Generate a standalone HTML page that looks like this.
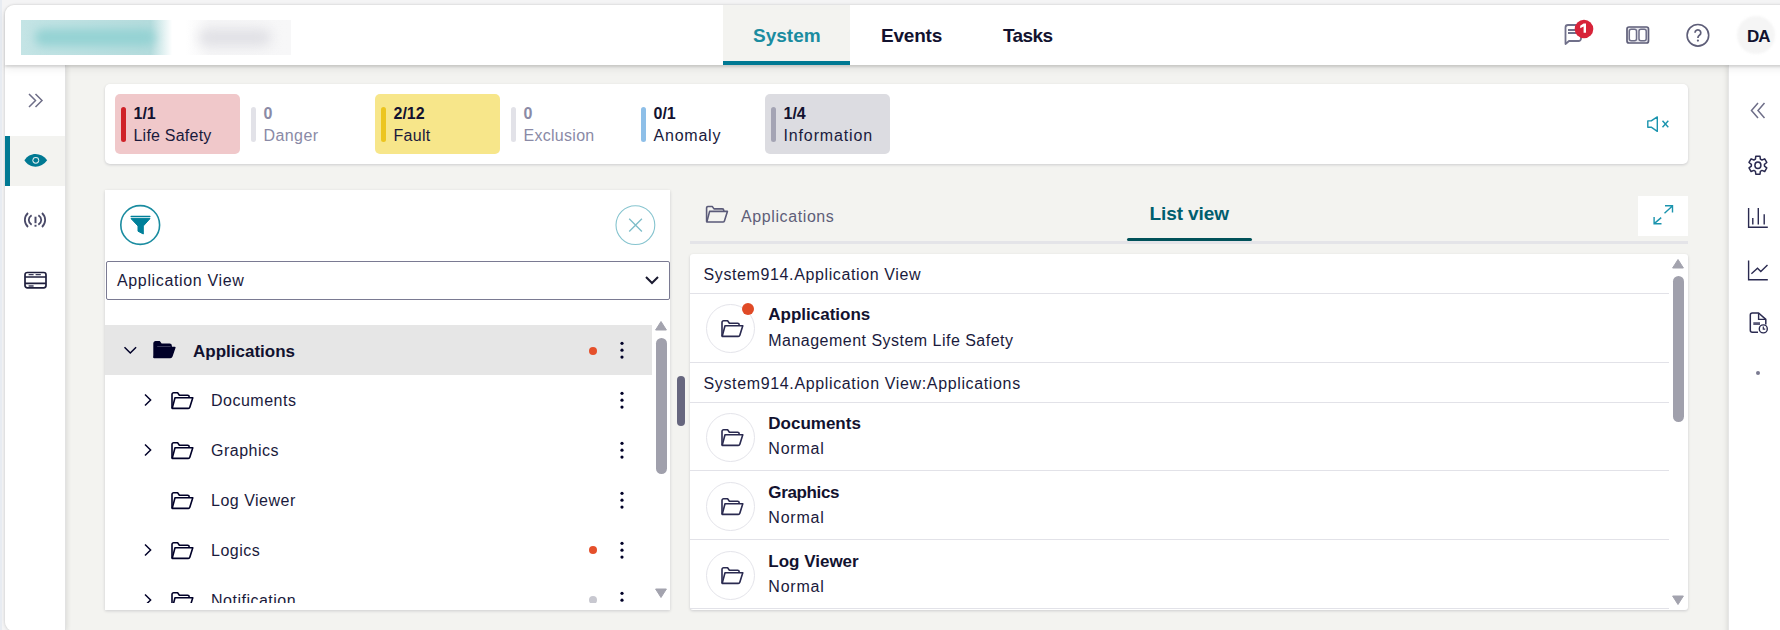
<!DOCTYPE html>
<html><head><meta charset="utf-8">
<style>
*{box-sizing:border-box;margin:0;padding:0}
html,body{width:1780px;height:630px;overflow:hidden;background:#f4f4f5;font-family:"Liberation Sans",sans-serif;color:#000028;position:relative}
.abs{position:absolute}
.t{position:absolute;white-space:nowrap;line-height:1}
svg text{font-family:"Liberation Sans",sans-serif}
</style></head>
<body>

<div class="abs" style="left:0px;top:0px;width:2px;height:630px;background:#e8ecf2"></div>
<div class="abs" style="left:5px;top:5px;width:1800px;height:626px;background:#f3f3f0;border-radius:9px;box-shadow:0 0 3px rgba(0,0,0,.14)"></div>
<div class="abs" style="left:5px;top:5px;width:1800px;height:60px;background:#fff;border-radius:9px 0 0 0;box-shadow:0 1.5px 2.5px rgba(0,0,0,.13),0 4px 8px rgba(0,0,0,.07);z-index:3"></div>
<div class="abs" style="left:21px;top:20px;width:270px;height:35px;overflow:hidden;z-index:4;background:linear-gradient(90deg,#c4e4e5 0,#b5dcdd 48%,#fff 56%,#fff 61%,#f6f6f7 70%,#f7f7f8 100%)"><div class="abs" style="left:14px;top:9px;width:120px;height:17px;border-radius:8px;background:#94d2d3;filter:blur(5px)"></div><div class="abs" style="left:178px;top:9px;width:72px;height:17px;border-radius:8px;background:#e0e0e5;filter:blur(6px)"></div></div>
<div class="abs" style="z-index:5;left:0;top:0">
<div class="abs" style="left:723px;top:5px;width:127px;height:60px;background:#f3f3f0"></div>
<div class="abs" style="left:723px;top:61px;width:127px;height:4px;background:#007993"></div>
<div class="t" style="left:753px;top:25.92px;font-size:19px;font-weight:bold;color:#1a8ca0;letter-spacing:0px;">System</div>
<div class="t" style="left:881px;top:25.92px;font-size:19px;font-weight:bold;color:#12122f;letter-spacing:-0.2px;">Events</div>
<div class="t" style="left:1003px;top:25.92px;font-size:19px;font-weight:bold;color:#12122f;letter-spacing:-0.6px;">Tasks</div>
<svg class="abs" style="left:1555px;top:15px;" width="40" height="35" viewBox="0 0 40 35"><path d="M10.5 29 V12.5 a2.5 2.5 0 0 1 2.5 -2.5 H26 V23.5 a2.5 2.5 0 0 1 -2.5 2.5 H14 Z" fill="none" stroke="#70708a" stroke-width="1.8" stroke-linejoin="round"/>
<path d="M13 15 H22 M13 18 H22" stroke="#70708a" stroke-width="1.8"/>
<circle cx="29" cy="14" r="9.3" fill="#d72339"/>
<path d="M25.2 10.8 L28.6 8.6 H31 V17.8 H28.6 V11.6 L25.2 13.2 Z" fill="#fff"/></svg>
<svg class="abs" style="left:1615px;top:15px;" width="40" height="35" viewBox="0 0 40 35"><rect x="12" y="12" width="21.5" height="16" rx="2" fill="#e6e6ec" stroke="#5e5e78" stroke-width="1.7"/>
<rect x="14.3" y="14.3" width="7.2" height="11.4" rx="2" fill="#fff" stroke="#6e6e88" stroke-width="1.5"/>
<rect x="24" y="14.3" width="7.2" height="11.4" rx="2" fill="#fff" stroke="#6e6e88" stroke-width="1.5"/></svg>
<svg class="abs" style="left:1675px;top:15px;" width="40" height="35" viewBox="0 0 40 35"><circle cx="22.9" cy="20.3" r="10.8" fill="none" stroke="#5e5e78" stroke-width="1.6"/>
<path d="M20 17.8 a2.9 2.9 0 1 1 4.4 2.5 c-1.1 .7 -1.5 1.2 -1.5 2.6" fill="none" stroke="#5e5e78" stroke-width="1.7"/>
<circle cx="22.9" cy="25.6" r="1.1" fill="#5e5e78"/></svg>
<div class="abs" style="left:1737px;top:16px;width:38px;height:38px;border-radius:50%;background:#f5f5f5;filter:blur(1px)"></div>
<div class="t" style="left:1747px;top:27.61px;font-size:17px;font-weight:bold;color:#12122f;letter-spacing:-1px;">DA</div>
</div>
<div class="abs" style="left:5px;top:65px;width:61px;height:566px;background:#fff;border-right:1px solid #e2e2e2;border-radius:0 0 0 9px;box-shadow:1px 0 5px rgba(0,0,0,.10);z-index:2"></div>
<div class="abs" style="z-index:3;left:0;top:0">
<svg class="abs" style="left:25px;top:90px;" width="20" height="20" viewBox="0 0 20 20"><path d="M4 4 L10.5 10.5 L4 17 M10.5 4 L17 10.5 L10.5 17" fill="none" stroke="#6e6e88" stroke-width="1.5"/></svg>
<div class="abs" style="left:5px;top:136px;width:60px;height:50px;background:#f3f3f0"></div>
<div class="abs" style="left:5px;top:136px;width:5px;height:50px;background:#007993"></div>
<svg class="abs" style="left:18px;top:145px;" width="35" height="35" viewBox="0 0 35 35"><path d="M6.4 15.3 C11.5 6.8 23.3 6.8 29.2 15.3 C23.3 23.8 11.5 23.8 6.4 15.3 Z" fill="#007993"/><circle cx="17.8" cy="15.3" r="3.4" fill="#dfeced"/><circle cx="17.8" cy="15.3" r="2.4" fill="#007993"/></svg>
<svg class="abs" style="left:22px;top:208px;" width="26" height="24" viewBox="0 0 26 24"><path d="M6 5 C1.8 9 1.8 15 6 19 M9.6 7.3 C5.8 10 5.8 14 9.6 16.7 M20 5 C24.2 9 24.2 15 20 19 M16.4 7.3 C20.2 10 20.2 14 16.4 16.7" fill="none" stroke="#4a4a68" stroke-width="1.8"/>
<path d="M13.5 8.7 V15.2" stroke="#4a4a68" stroke-width="2"/><rect x="12.5" y="16.8" width="2" height="1.9" fill="#4a4a68"/></svg>
<svg class="abs" style="left:22px;top:268px;" width="26" height="24" viewBox="0 0 26 24"><rect x="3" y="4.5" width="21" height="15.4" rx="2.3" fill="none" stroke="#1e1e3c" stroke-width="1.7"/>
<path d="M3 9 H24 M3 15.4 H24" stroke="#1e1e3c" stroke-width="1.6"/><path d="M6.6 6.6 H11.6 M13.6 6.6 H18.8 M6.6 18 H11.6" stroke="#3a3a58" stroke-width="1.3"/></svg>
</div>
<div class="abs" style="left:1727.5px;top:65px;width:80px;height:600px;background:#fff;border-left:1px solid #e6e6e6;box-shadow:-1px 0 5px rgba(0,0,0,.10);z-index:2"></div>
<div class="abs" style="z-index:3;left:0;top:0">
<svg class="abs" style="left:1747px;top:100px;" width="20" height="20" viewBox="0 0 20 20"><path d="M11 3 L4.5 10.5 L11 18 M17.5 3 L11 10.5 L17.5 18" fill="none" stroke="#6e6e88" stroke-width="1.5"/></svg>
<svg class="abs" style="left:1740px;top:148px;" width="35" height="35" viewBox="0 0 35 35"><path d="M15.43 11.08 L15.81 8.14 L19.99 8.14 L20.37 11.08 L21.96 12.00 L24.70 10.86 L26.79 14.48 L24.44 16.28 L24.44 18.12 L26.79 19.92 L24.70 23.54 L21.96 22.40 L20.37 23.32 L19.99 26.26 L15.81 26.26 L15.43 23.32 L13.84 22.40 L11.10 23.54 L9.01 19.92 L11.36 18.12 L11.36 16.28 L9.01 14.48 L11.10 10.86 L13.84 12.00 Z" fill="none" stroke="#2a2a50" stroke-width="1.5" stroke-linejoin="round"/><ellipse cx="17.9" cy="17.2" rx="3" ry="3.3" fill="none" stroke="#2a2a50" stroke-width="1.5"/></svg>
<svg class="abs" style="left:1740px;top:200px;" width="35" height="35" viewBox="0 0 35 35"><path d="M8.6 8 V27.2 H27.8 M12.8 18 V24.5 M18.3 8 V24.5 M24.2 14.2 V24.5" fill="none" stroke="#2a2a50" stroke-width="1.4"/></svg>
<svg class="abs" style="left:1740px;top:253px;" width="35" height="35" viewBox="0 0 35 35"><path d="M8.6 7.5 V26.7 H27.8 M11.4 20.8 L17.5 15.3 L20.8 18.6 L27.5 12" fill="none" stroke="#2a2a50" stroke-width="1.4"/></svg>
<svg class="abs" style="left:1740px;top:305px;" width="35" height="35" viewBox="0 0 35 35"><path d="M18 27.2 H12.3 a2 2 0 0 1 -2 -2 V10 a2 2 0 0 1 2 -2 H18.6 L25.8 14.4 V19.5" fill="none" stroke="#2a2a50" stroke-width="1.5" stroke-linejoin="round"/>
<path d="M18.6 8 V14.4 H25.8" fill="none" stroke="#2a2a50" stroke-width="1.4"/><rect x="13.3" y="17.2" width="6.7" height="2.8" fill="#5a5a78"/>
<circle cx="23.3" cy="23.9" r="4" fill="#fff" stroke="#2a2a50" stroke-width="1.4"/><path d="M23.3 21.6 V24.2 H25.2" fill="none" stroke="#2a2a50" stroke-width="1.2"/></svg>
<div class="abs" style="left:1756px;top:371px;width:4px;height:4px;border-radius:50%;background:#7a7a90"></div>
</div>
<div class="abs" style="left:105px;top:84px;width:1583px;height:80px;background:#fff;border-radius:5px;box-shadow:0 1px 3px rgba(0,0,40,.16)"></div>
<div class="abs" style="left:115px;top:94px;width:125px;height:60px;background:#f0c8ca;border-radius:5px"></div>
<div class="abs" style="left:120.5px;top:106.5px;width:5px;height:35px;background:#cf2128;border-radius:3px"></div>
<div class="t" style="left:133.5px;top:106.26px;font-size:16px;font-weight:bold;color:#12122f;letter-spacing:0px;">1/1</div>
<div class="t" style="left:133.5px;top:127.56px;font-size:16px;font-weight:normal;color:#1a1a3c;letter-spacing:0.22px;">Life Safety</div>
<div class="abs" style="left:250.5px;top:106.5px;width:5px;height:35px;background:#e2e2e8;border-radius:3px"></div>
<div class="t" style="left:263.5px;top:106.26px;font-size:16px;font-weight:bold;color:#8a8aa6;letter-spacing:0px;">0</div>
<div class="t" style="left:263.5px;top:127.56px;font-size:16px;font-weight:normal;color:#8a8aa6;letter-spacing:0.42px;">Danger</div>
<div class="abs" style="left:375px;top:94px;width:125px;height:60px;background:#f7e68a;border-radius:5px"></div>
<div class="abs" style="left:380.5px;top:106.5px;width:5px;height:35px;background:#ecc51f;border-radius:3px"></div>
<div class="t" style="left:393.5px;top:106.26px;font-size:16px;font-weight:bold;color:#12122f;letter-spacing:0px;">2/12</div>
<div class="t" style="left:393.5px;top:127.56px;font-size:16px;font-weight:normal;color:#1a1a3c;letter-spacing:0.28px;">Fault</div>
<div class="abs" style="left:510.5px;top:106.5px;width:5px;height:35px;background:#e2e2e8;border-radius:3px"></div>
<div class="t" style="left:523.5px;top:106.26px;font-size:16px;font-weight:bold;color:#8a8aa6;letter-spacing:0px;">0</div>
<div class="t" style="left:523.5px;top:127.56px;font-size:16px;font-weight:normal;color:#8a8aa6;letter-spacing:0.28px;">Exclusion</div>
<div class="abs" style="left:640.5px;top:106.5px;width:5px;height:35px;background:#8ebfe8;border-radius:3px"></div>
<div class="t" style="left:653.5px;top:106.26px;font-size:16px;font-weight:bold;color:#12122f;letter-spacing:0px;">0/1</div>
<div class="t" style="left:653.5px;top:127.56px;font-size:16px;font-weight:normal;color:#1a1a3c;letter-spacing:0.78px;">Anomaly</div>
<div class="abs" style="left:765px;top:94px;width:125px;height:60px;background:#dcdce1;border-radius:5px"></div>
<div class="abs" style="left:770.5px;top:106.5px;width:5px;height:35px;background:#a4a4b4;border-radius:3px"></div>
<div class="t" style="left:783.5px;top:106.26px;font-size:16px;font-weight:bold;color:#12122f;letter-spacing:0px;">1/4</div>
<div class="t" style="left:783.5px;top:127.56px;font-size:16px;font-weight:normal;color:#1a1a3c;letter-spacing:0.86px;">Information</div>
<svg class="abs" style="left:1640px;top:110px;" width="35" height="28" viewBox="0 0 35 28"><path d="M7.8 10.9 H11.2 L17.3 6.9 V21.4 L11.2 17.2 H7.8 Z" fill="none" stroke="#1a94ae" stroke-width="1.4" stroke-linejoin="round"/>
<path d="M22.5 10.8 L28.3 17.2 M28.3 10.8 L22.5 17.2" stroke="#1a94ae" stroke-width="1.4"/></svg>
<div class="abs" style="left:105px;top:190px;width:565px;height:420px;background:#fff;box-shadow:0 1px 3px rgba(0,0,40,.16)"></div>
<svg class="abs" style="left:118px;top:203px;" width="44" height="44" viewBox="0 0 44 44"><circle cx="22.2" cy="22" r="19.4" fill="none" stroke="#1a8ca0" stroke-width="1.6"/>
<path d="M13 15.6 H32 L25.3 23 V31 L20 28.2 V23 Z" fill="#00809a" stroke="#00809a" stroke-width="1" stroke-linejoin="round"/><path d="M13.2 13.6 H31.8" stroke="#00809a" stroke-width="1.5" stroke-linecap="round"/></svg>
<svg class="abs" style="left:613px;top:203px;" width="44" height="44" viewBox="0 0 44 44"><circle cx="22.4" cy="22.1" r="19.4" fill="none" stroke="#86c4cf" stroke-width="1.1"/>
<path d="M16.2 15.7 L28.9 28.5 M28.9 15.7 L16.2 28.5" stroke="#7dbdc9" stroke-width="1.3"/></svg>
<div class="abs" style="left:106px;top:261px;width:564px;height:39px;border:1.5px solid #7a7a92;border-radius:2px;background:#fff"></div>
<div class="t" style="left:117px;top:273.46px;font-size:16px;font-weight:normal;color:#1a1a3c;letter-spacing:0.65px;">Application View</div>
<svg class="abs" style="left:640px;top:270px;" width="24" height="20" viewBox="0 0 24 20"><path d="M6 7 L12 13 L18 7" fill="none" stroke="#1a1a30" stroke-width="2"/></svg>
<div class="abs" style="left:105px;top:325px;width:547px;height:50px;background:#e6e6e6"></div>
<svg class="abs" style="left:120px;top:340px;" width="20" height="20" viewBox="0 0 20 20"><path d="M4.5 7.3 L10.3 13 L16.1 7.3" fill="none" stroke="#000028" stroke-width="1.5"/></svg>
<svg class="abs" style="left:152px;top:341px;" width="24" height="18" viewBox="0 0 24 18"><path d="M2 16.2 V2.4 a1.6 1.6 0 0 1 1.6 -1.6 H7.6 L9.4 3.3 H17.6 a1.6 1.6 0 0 1 1.6 1.6 V5.8 H5 Z" fill="#000028" stroke="#000028" stroke-width="1.4" stroke-linejoin="round"/><path d="M5.2 5.8 H18.6" stroke="#8a8aa0" stroke-width="0.8"/><path d="M2.2 16.4 L5 6.6 H22.8 L19.8 15.3 a1.6 1.6 0 0 1 -1.5 1.1 Z" fill="#000028" stroke="#000028" stroke-width="1.6" stroke-linejoin="round"/></svg>
<div class="t" style="left:193px;top:342.61px;font-size:17px;font-weight:bold;color:#12122f;letter-spacing:0px;">Applications</div>
<div class="abs" style="left:589px;top:346.8px;width:8px;height:8px;border-radius:50%;background:#e5502b"></div>
<svg class="abs" style="left:617.6px;top:339.2px;" width="8" height="22" viewBox="0 0 8 22"><circle cx="4" cy="4.3" r="1.6" fill="#000028"/><circle cx="4" cy="11.2" r="1.6" fill="#000028"/><circle cx="4" cy="18.1" r="1.6" fill="#000028"/></svg>
<div class="abs" style="left:105px;top:375px;width:547px;height:228px;overflow:hidden">
<svg class="abs" style="left:34px;top:15px;" width="20" height="20" viewBox="0 0 20 20"><path d="M6 4.5 L11.6 10 L6 15.5" fill="none" stroke="#000028" stroke-width="1.5"/></svg>
<svg class="abs" style="left:65px;top:16.5px;" width="24" height="18" viewBox="0 0 24 18"><path d="M2 16.2 V2.4 a1.6 1.6 0 0 1 1.6 -1.6 H7.6 L9.4 3.3 H17.6 a1.6 1.6 0 0 1 1.6 1.6 V5.8" fill="none" stroke="#000028" stroke-width="1.6" stroke-linejoin="round"/><path d="M2.2 16.4 L5 5.8 H22.8 L19.8 15.3 a1.6 1.6 0 0 1 -1.5 1.1 Z" fill="#fff" stroke="#000028" stroke-width="1.6" stroke-linejoin="round"/></svg>
<div class="t" style="left:106px;top:18.46px;font-size:16px;font-weight:normal;color:#1a1a3c;letter-spacing:0.5px;">Documents</div>
<svg class="abs" style="left:512.6px;top:14px;" width="8" height="22" viewBox="0 0 8 22"><circle cx="4" cy="4.3" r="1.6" fill="#000028"/><circle cx="4" cy="11.2" r="1.6" fill="#000028"/><circle cx="4" cy="18.1" r="1.6" fill="#000028"/></svg>
<svg class="abs" style="left:34px;top:65px;" width="20" height="20" viewBox="0 0 20 20"><path d="M6 4.5 L11.6 10 L6 15.5" fill="none" stroke="#000028" stroke-width="1.5"/></svg>
<svg class="abs" style="left:65px;top:66.5px;" width="24" height="18" viewBox="0 0 24 18"><path d="M2 16.2 V2.4 a1.6 1.6 0 0 1 1.6 -1.6 H7.6 L9.4 3.3 H17.6 a1.6 1.6 0 0 1 1.6 1.6 V5.8" fill="none" stroke="#000028" stroke-width="1.6" stroke-linejoin="round"/><path d="M2.2 16.4 L5 5.8 H22.8 L19.8 15.3 a1.6 1.6 0 0 1 -1.5 1.1 Z" fill="#fff" stroke="#000028" stroke-width="1.6" stroke-linejoin="round"/></svg>
<div class="t" style="left:106px;top:68.46px;font-size:16px;font-weight:normal;color:#1a1a3c;letter-spacing:0.5px;">Graphics</div>
<svg class="abs" style="left:512.6px;top:64px;" width="8" height="22" viewBox="0 0 8 22"><circle cx="4" cy="4.3" r="1.6" fill="#000028"/><circle cx="4" cy="11.2" r="1.6" fill="#000028"/><circle cx="4" cy="18.1" r="1.6" fill="#000028"/></svg>
<svg class="abs" style="left:65px;top:116.5px;" width="24" height="18" viewBox="0 0 24 18"><path d="M2 16.2 V2.4 a1.6 1.6 0 0 1 1.6 -1.6 H7.6 L9.4 3.3 H17.6 a1.6 1.6 0 0 1 1.6 1.6 V5.8" fill="none" stroke="#000028" stroke-width="1.6" stroke-linejoin="round"/><path d="M2.2 16.4 L5 5.8 H22.8 L19.8 15.3 a1.6 1.6 0 0 1 -1.5 1.1 Z" fill="#fff" stroke="#000028" stroke-width="1.6" stroke-linejoin="round"/></svg>
<div class="t" style="left:106px;top:118.46px;font-size:16px;font-weight:normal;color:#1a1a3c;letter-spacing:0.5px;">Log Viewer</div>
<svg class="abs" style="left:512.6px;top:114px;" width="8" height="22" viewBox="0 0 8 22"><circle cx="4" cy="4.3" r="1.6" fill="#000028"/><circle cx="4" cy="11.2" r="1.6" fill="#000028"/><circle cx="4" cy="18.1" r="1.6" fill="#000028"/></svg>
<svg class="abs" style="left:34px;top:165px;" width="20" height="20" viewBox="0 0 20 20"><path d="M6 4.5 L11.6 10 L6 15.5" fill="none" stroke="#000028" stroke-width="1.5"/></svg>
<svg class="abs" style="left:65px;top:166.5px;" width="24" height="18" viewBox="0 0 24 18"><path d="M2 16.2 V2.4 a1.6 1.6 0 0 1 1.6 -1.6 H7.6 L9.4 3.3 H17.6 a1.6 1.6 0 0 1 1.6 1.6 V5.8" fill="none" stroke="#000028" stroke-width="1.6" stroke-linejoin="round"/><path d="M2.2 16.4 L5 5.8 H22.8 L19.8 15.3 a1.6 1.6 0 0 1 -1.5 1.1 Z" fill="#fff" stroke="#000028" stroke-width="1.6" stroke-linejoin="round"/></svg>
<div class="t" style="left:106px;top:168.46px;font-size:16px;font-weight:normal;color:#1a1a3c;letter-spacing:0.5px;">Logics</div>
<div class="abs" style="left:484px;top:171.20000000000005px;width:8px;height:8px;border-radius:50%;background:#e5502b"></div>
<svg class="abs" style="left:512.6px;top:164px;" width="8" height="22" viewBox="0 0 8 22"><circle cx="4" cy="4.3" r="1.6" fill="#000028"/><circle cx="4" cy="11.2" r="1.6" fill="#000028"/><circle cx="4" cy="18.1" r="1.6" fill="#000028"/></svg>
<svg class="abs" style="left:34px;top:215px;" width="20" height="20" viewBox="0 0 20 20"><path d="M6 4.5 L11.6 10 L6 15.5" fill="none" stroke="#000028" stroke-width="1.5"/></svg>
<svg class="abs" style="left:65px;top:216.5px;" width="24" height="18" viewBox="0 0 24 18"><path d="M2 16.2 V2.4 a1.6 1.6 0 0 1 1.6 -1.6 H7.6 L9.4 3.3 H17.6 a1.6 1.6 0 0 1 1.6 1.6 V5.8" fill="none" stroke="#000028" stroke-width="1.6" stroke-linejoin="round"/><path d="M2.2 16.4 L5 5.8 H22.8 L19.8 15.3 a1.6 1.6 0 0 1 -1.5 1.1 Z" fill="#fff" stroke="#000028" stroke-width="1.6" stroke-linejoin="round"/></svg>
<div class="t" style="left:106px;top:218.46px;font-size:16px;font-weight:normal;color:#1a1a3c;letter-spacing:0.5px;">Notification</div>
<div class="abs" style="left:484px;top:221.20000000000005px;width:8px;height:8px;border-radius:50%;background:#c8c8d0"></div>
<svg class="abs" style="left:512.6px;top:214px;" width="8" height="22" viewBox="0 0 8 22"><circle cx="4" cy="4.3" r="1.6" fill="#000028"/><circle cx="4" cy="11.2" r="1.6" fill="#000028"/><circle cx="4" cy="18.1" r="1.6" fill="#000028"/></svg>
</div>
<svg class="abs" style="left:654px;top:320px;" width="14" height="12" viewBox="0 0 14 12"><path d="M1.6 10 L7 1.5 L12.4 10 Z" fill="#a3a3ae" stroke="#a3a3ae" stroke-width="1" stroke-linejoin="round"/></svg>
<div class="abs" style="left:655.5px;top:338px;width:11.5px;height:136px;background:#a0a0ac;border-radius:6px"></div>
<svg class="abs" style="left:654px;top:587px;" width="14" height="12" viewBox="0 0 14 12"><path d="M1.6 2 L7 10.5 L12.4 2 Z" fill="#a3a3ae" stroke="#a3a3ae" stroke-width="1" stroke-linejoin="round"/></svg>
<div class="abs" style="left:676.5px;top:375.5px;width:8px;height:50px;background:#66667e;border-radius:4px"></div>
<svg class="abs" style="left:703px;top:204px;transform:translate(1.6px,1.6px)" width="26" height="22" viewBox="0 0 26 22"><path d="M2 16.2 V2.4 a1.6 1.6 0 0 1 1.6 -1.6 H7.6 L9.4 3.3 H17.6 a1.6 1.6 0 0 1 1.6 1.6 V5.8" fill="none" stroke="#5a5a78" stroke-width="1.6" stroke-linejoin="round"/><path d="M2.2 16.4 L5 5.8 H22.8 L19.8 15.3 a1.6 1.6 0 0 1 -1.5 1.1 Z" fill="none" stroke="#5a5a78" stroke-width="1.6" stroke-linejoin="round"/></svg>
<div class="t" style="left:741px;top:208.96px;font-size:16px;font-weight:normal;color:#5e5e78;letter-spacing:0.6px;">Applications</div>
<div class="t" style="left:1149.5px;top:204.42px;font-size:19px;font-weight:bold;color:#005e6e;letter-spacing:-0.1px;">List view</div>
<div class="abs" style="left:690px;top:240.5px;width:998px;height:3.5px;background:#e4e4e8"></div>
<div class="abs" style="left:1127px;top:237.5px;width:125px;height:3px;background:#005159;border-radius:1.5px"></div>
<div class="abs" style="left:1638px;top:195.5px;width:50px;height:40px;background:#fff"></div>
<svg class="abs" style="left:1648px;top:200px;" width="32" height="32" viewBox="0 0 32 32"><path d="M16.5 13.3 L24.4 5.9 M17 5.8 H24.5 V12.4" fill="none" stroke="#1a94ae" stroke-width="1.4"/>
<path d="M13.2 17.6 L6.2 23.6 M6.1 16.9 V23.7 H13.5" fill="none" stroke="#1a94ae" stroke-width="1.4"/></svg>
<div class="abs" style="left:690px;top:254px;width:998px;height:356px;background:#fff;border-radius:3px;box-shadow:0 1px 3px rgba(0,0,40,.16)"></div>
<div class="t" style="left:703.5px;top:267.46px;font-size:16px;font-weight:normal;color:#1a1a3c;letter-spacing:0.62px;">System914.Application View</div>
<div class="abs" style="left:690px;top:293px;width:979px;height:1px;background:#e2e2e8"></div>
<div class="t" style="left:703.5px;top:376.26px;font-size:16px;font-weight:normal;color:#1a1a3c;letter-spacing:0.64px;">System914.Application View:Applications</div>
<div class="abs" style="left:690px;top:362px;width:979px;height:1px;background:#e2e2e8"></div>
<div class="abs" style="left:690px;top:402px;width:979px;height:1px;background:#e2e2e8"></div>
<div class="abs" style="left:706px;top:304.3px;width:49px;height:49px;border-radius:50%;border:1px solid #e4e4ea;background:#fff"></div>
<svg class="abs" style="left:719.5px;top:320.0px;" width="24" height="18" viewBox="0 0 24 18"><path d="M2 16.2 V2.4 a1.6 1.6 0 0 1 1.6 -1.6 H7.6 L9.4 3.3 H17.6 a1.6 1.6 0 0 1 1.6 1.6 V5.8" fill="none" stroke="#2a2a50" stroke-width="1.6" stroke-linejoin="round"/><path d="M2.2 16.4 L5 5.8 H22.8 L19.8 15.3 a1.6 1.6 0 0 1 -1.5 1.1 Z" fill="#fff" stroke="#2a2a50" stroke-width="1.6" stroke-linejoin="round"/></svg>
<div class="abs" style="left:742px;top:303.0px;width:12.2px;height:12.2px;border-radius:50%;background:#e04a26"></div>
<div class="t" style="left:768.3px;top:306.11px;font-size:17px;font-weight:bold;color:#12122f;letter-spacing:0px;">Applications</div>
<div class="t" style="left:768.3px;top:332.56px;font-size:16px;font-weight:normal;color:#1a1a3c;letter-spacing:0.48px;">Management System Life Safety</div>
<div class="abs" style="left:706px;top:413.1px;width:49px;height:49px;border-radius:50%;border:1px solid #e4e4ea;background:#fff"></div>
<svg class="abs" style="left:719.5px;top:428.8px;" width="24" height="18" viewBox="0 0 24 18"><path d="M2 16.2 V2.4 a1.6 1.6 0 0 1 1.6 -1.6 H7.6 L9.4 3.3 H17.6 a1.6 1.6 0 0 1 1.6 1.6 V5.8" fill="none" stroke="#2a2a50" stroke-width="1.6" stroke-linejoin="round"/><path d="M2.2 16.4 L5 5.8 H22.8 L19.8 15.3 a1.6 1.6 0 0 1 -1.5 1.1 Z" fill="#fff" stroke="#2a2a50" stroke-width="1.6" stroke-linejoin="round"/></svg>
<div class="t" style="left:768.3px;top:414.91px;font-size:17px;font-weight:bold;color:#12122f;letter-spacing:0px;">Documents</div>
<div class="t" style="left:768.3px;top:441.36px;font-size:16px;font-weight:normal;color:#1a1a3c;letter-spacing:0.8px;">Normal</div>
<div class="abs" style="left:706px;top:482.0px;width:49px;height:49px;border-radius:50%;border:1px solid #e4e4ea;background:#fff"></div>
<svg class="abs" style="left:719.5px;top:497.7px;" width="24" height="18" viewBox="0 0 24 18"><path d="M2 16.2 V2.4 a1.6 1.6 0 0 1 1.6 -1.6 H7.6 L9.4 3.3 H17.6 a1.6 1.6 0 0 1 1.6 1.6 V5.8" fill="none" stroke="#2a2a50" stroke-width="1.6" stroke-linejoin="round"/><path d="M2.2 16.4 L5 5.8 H22.8 L19.8 15.3 a1.6 1.6 0 0 1 -1.5 1.1 Z" fill="#fff" stroke="#2a2a50" stroke-width="1.6" stroke-linejoin="round"/></svg>
<div class="t" style="left:768.3px;top:483.81px;font-size:17px;font-weight:bold;color:#12122f;letter-spacing:-0.35px;">Graphics</div>
<div class="t" style="left:768.3px;top:510.26px;font-size:16px;font-weight:normal;color:#1a1a3c;letter-spacing:0.8px;">Normal</div>
<div class="abs" style="left:706px;top:550.9px;width:49px;height:49px;border-radius:50%;border:1px solid #e4e4ea;background:#fff"></div>
<svg class="abs" style="left:719.5px;top:566.6px;" width="24" height="18" viewBox="0 0 24 18"><path d="M2 16.2 V2.4 a1.6 1.6 0 0 1 1.6 -1.6 H7.6 L9.4 3.3 H17.6 a1.6 1.6 0 0 1 1.6 1.6 V5.8" fill="none" stroke="#2a2a50" stroke-width="1.6" stroke-linejoin="round"/><path d="M2.2 16.4 L5 5.8 H22.8 L19.8 15.3 a1.6 1.6 0 0 1 -1.5 1.1 Z" fill="#fff" stroke="#2a2a50" stroke-width="1.6" stroke-linejoin="round"/></svg>
<div class="t" style="left:768.3px;top:552.71px;font-size:17px;font-weight:bold;color:#12122f;letter-spacing:0px;">Log Viewer</div>
<div class="t" style="left:768.3px;top:579.16px;font-size:16px;font-weight:normal;color:#1a1a3c;letter-spacing:0.8px;">Normal</div>
<div class="abs" style="left:690px;top:470px;width:979px;height:1px;background:#e2e2e8"></div>
<div class="abs" style="left:690px;top:539px;width:979px;height:1px;background:#e2e2e8"></div>
<div class="abs" style="left:690px;top:608px;width:979px;height:1px;background:#e2e2e8"></div>
<svg class="abs" style="left:1671px;top:258px;" width="14" height="12" viewBox="0 0 14 12"><path d="M1.6 10 L7 1.5 L12.4 10 Z" fill="#a3a3ae" stroke="#a3a3ae" stroke-width="1" stroke-linejoin="round"/></svg>
<div class="abs" style="left:1672.5px;top:276px;width:11.5px;height:145.5px;background:#a0a0ac;border-radius:6px"></div>
<svg class="abs" style="left:1671px;top:594px;" width="14" height="12" viewBox="0 0 14 12"><path d="M1.6 2 L7 10.5 L12.4 2 Z" fill="#a3a3ae" stroke="#a3a3ae" stroke-width="1" stroke-linejoin="round"/></svg>
</body></html>
